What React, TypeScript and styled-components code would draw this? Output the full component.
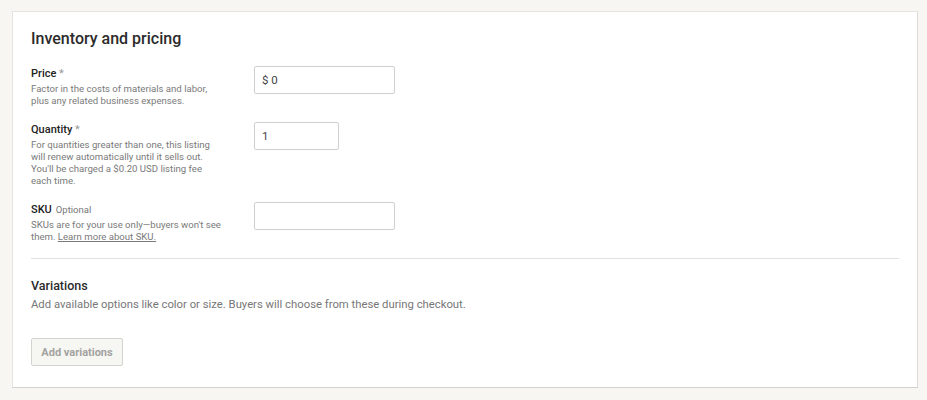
import React from "react";
import styled, { createGlobalStyle } from "styled-components";

const Global = createGlobalStyle`
  html, body { margin: 0; padding: 0; background: #f7f6f2; }
  body { font-family: Roboto, "Liberation Sans", Arial, sans-serif; }
`;

const Page = styled.div`
  padding: 11px 9px 14px 12px;
`;

const Card = styled.section`
  background: #ffffff;
  border: 1px solid #e4e3de;
  border-bottom-color: #d2d1cc;
  border-right-color: #dddcd7;
  padding: 18px 18px 18px 18px;
  height: 339px;
`;

const Title = styled.h2`
  margin: 0 0 18px;
  font-size: 16px;
  line-height: 18px;
  font-weight: 500;
  color: #2b2b2b;
`;

const Rows = styled.div`
  display: flex;
  flex-direction: column;
  gap: 15px;
`;

const Row = styled.div`
  display: grid;
  grid-template-columns: 223px 1fr;
  align-items: start;
`;

const LabelCol = styled.div`
  display: flex;
  flex-direction: column;
`;

const Label = styled.div`
  font-size: 11px;
  line-height: 15px;
  font-weight: 500;
  color: #222;
  margin-bottom: 2px;
`;

const Req = styled.span`
  color: #999;
  font-weight: 400;
`;

const Optional = styled.span`
  font-size: 9.5px;
  font-weight: 400;
  color: #777;
  margin-left: 4px;
`;

const Desc = styled.p`
  margin: 0;
  max-width: 193px;
  font-size: 9.6px;
  line-height: 12px;
  color: #7a7a7a;
`;

const DescLink = styled.a`
  color: #7a7a7a;
  text-decoration: underline;
`;

const Field = styled.div<{ $w: number }>`
  width: ${(p) => p.$w}px;
  height: 28px;
  box-sizing: border-box;
  border: 1px solid #cfcfcb;
  border-radius: 2px;
  display: flex;
  align-items: center;
  padding: 0 7px;
  font-size: 11.5px;
  color: #444;
`;

const Divider = styled.hr`
  border: none;
  border-top: 1px solid #e1e1dd;
  margin: 15px 0 19px;
`;

const SubTitle = styled.h3`
  margin: 0;
  font-size: 12.5px;
  line-height: 15px;
  font-weight: 500;
  color: #2b2b2b;
`;

const SubDesc = styled.p`
  margin: 4px 0 26px;
  font-size: 11.3px;
  line-height: 15px;
  color: #777;
`;

const Button = styled.button`
  width: 92px;
  height: 28px;
  box-sizing: border-box;
  background: #f6f6f3;
  border: 1px solid #d4d4cf;
  border-radius: 2px;
  font-family: inherit;
  font-size: 11px;
  font-weight: 700;
  color: #a3a3a0;
  padding: 0;
`;

export default function App() {
  return (
    <>
      <Global />
      <Page>
        <Card>
          <Title>Inventory and pricing</Title>
          <Rows>
            <Row>
              <LabelCol>
                <Label>
                  Price <Req>*</Req>
                </Label>
                <Desc>Factor in the costs of materials and labor, plus any related business expenses.</Desc>
              </LabelCol>
              <Field $w={141}>$ 0</Field>
            </Row>
            <Row>
              <LabelCol>
                <Label>
                  Quantity <Req>*</Req>
                </Label>
                <Desc>
                  For quantities greater than one, this listing will renew automatically until it sells out. You'll be
                  charged a $0.20 USD listing fee each time.
                </Desc>
              </LabelCol>
              <Field $w={85}>1</Field>
            </Row>
            <Row>
              <LabelCol>
                <Label>
                  SKU<Optional>Optional</Optional>
                </Label>
                <Desc>
                  SKUs are for your use only—buyers won't see them. <DescLink href="#">Learn more about SKU.</DescLink>
                </Desc>
              </LabelCol>
              <Field $w={141} />
            </Row>
          </Rows>
          <Divider />
          <SubTitle>Variations</SubTitle>
          <SubDesc>Add available options like color or size. Buyers will choose from these during checkout.</SubDesc>
          <Button>Add variations</Button>
        </Card>
      </Page>
    </>
  );
}
